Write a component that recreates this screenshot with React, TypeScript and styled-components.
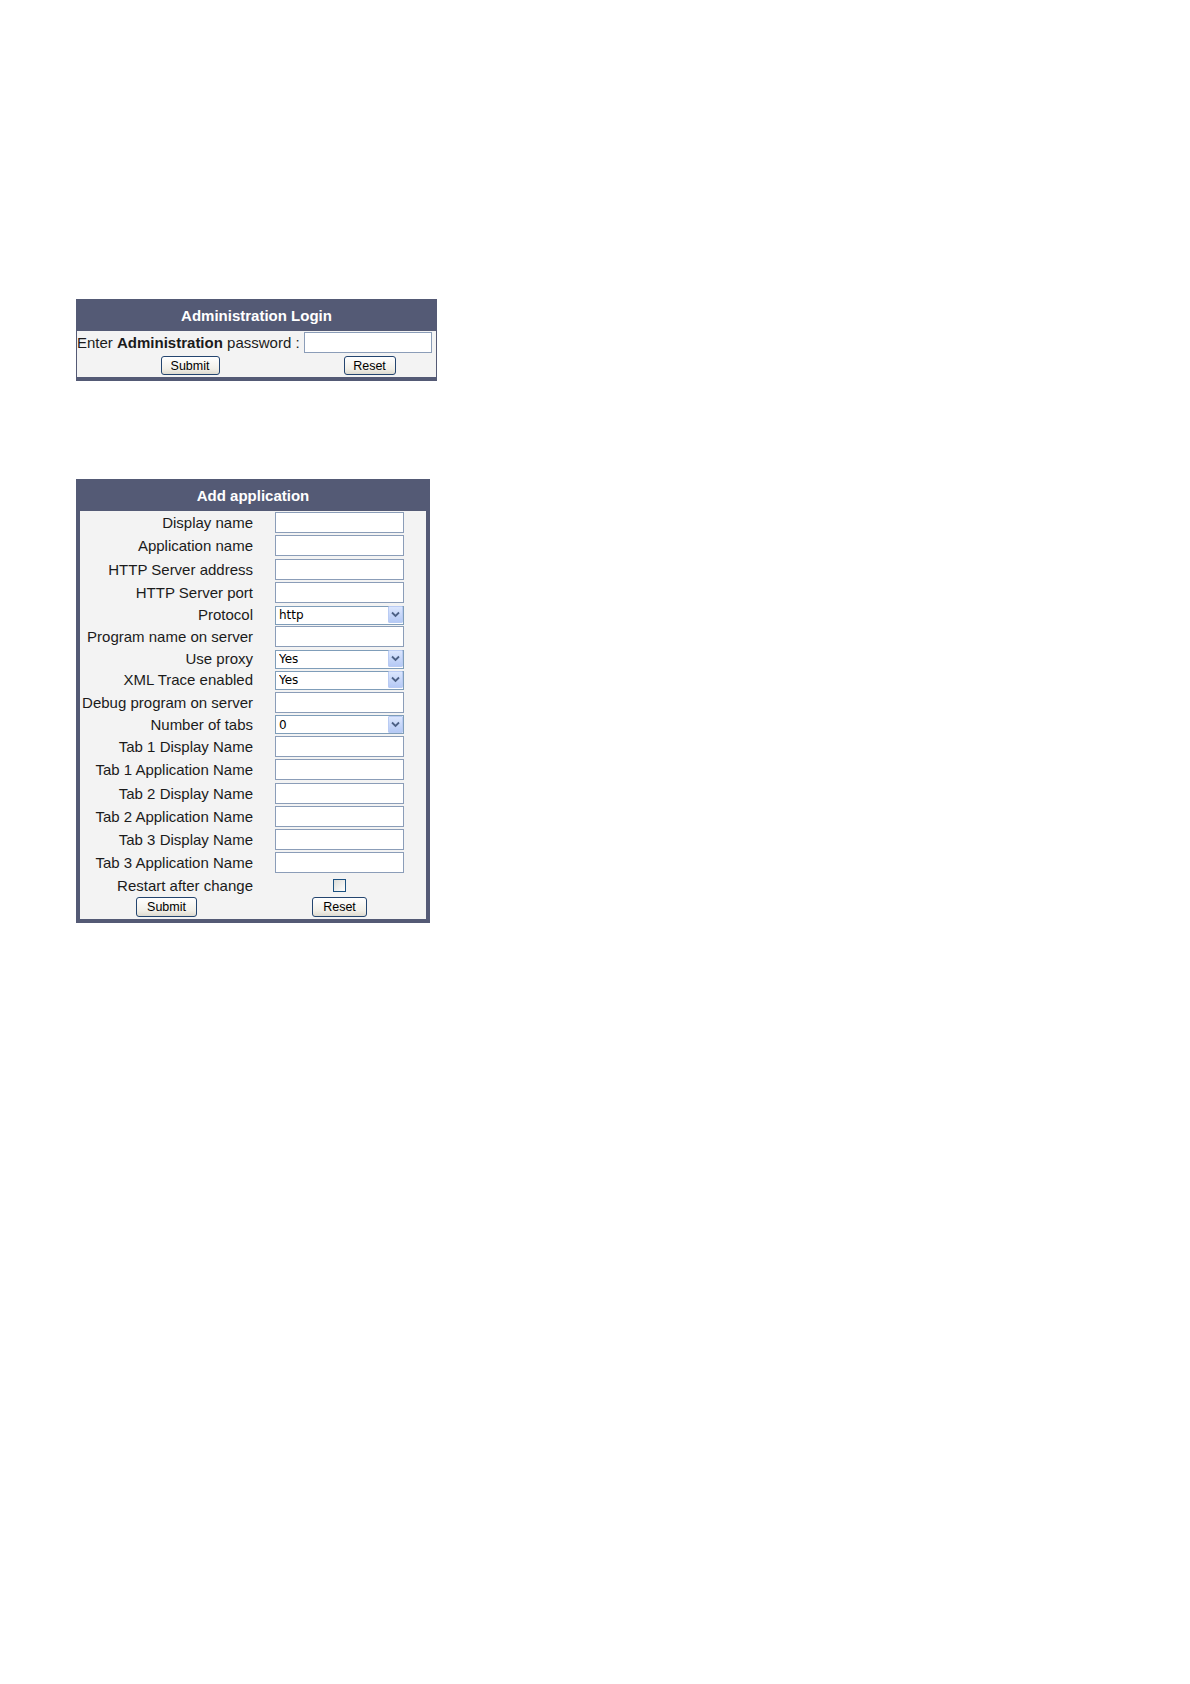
import React from 'react';
import styled, { createGlobalStyle } from 'styled-components';

const GlobalStyle = createGlobalStyle`
  html, body {
    margin: 0;
    padding: 0;
    background: #ffffff;
  }
  body {
    font-family: "Liberation Sans", Arial, sans-serif;
    color: #1b1b1b;
  }
`;

const Page = styled.div`
  display: flex;
  flex-direction: column;
  align-items: flex-start;
  gap: 98px;
  padding: 299px 0 0 76px;
  min-height: 1684px;
  box-sizing: border-box;
`;

const Panel = styled.form<{ $width: number; $side: number }>`
  width: ${(p) => p.$width}px;
  box-sizing: border-box;
  background: #545a75;
  padding: 0 ${(p) => p.$side}px 4px;
  display: flex;
  flex-direction: column;
  margin: 0;
`;

const PanelTitle = styled.div`
  height: 32px;
  display: flex;
  align-items: center;
  justify-content: center;
  color: #ffffff;
  font-weight: bold;
  font-size: 15px;
`;

const PanelBody = styled.div`
  background: #f3f3f3;
  display: flex;
  flex-direction: column;
`;

const Row = styled.div<{ $cols: string; $height: number }>`
  display: grid;
  grid-template-columns: ${(p) => p.$cols};
  align-items: center;
  height: ${(p) => p.$height}px;
`;

const Label = styled.label`
  text-align: right;
  font-size: 15px;
  white-space: nowrap;
  color: #1b1b1b;
`;

const Prompt = styled.span`
  font-size: 15px;
  white-space: nowrap;

  b {
    font-weight: bold;
  }
`;

const Cell = styled.div<{ $justify?: string }>`
  display: flex;
  justify-content: ${(p) => p.$justify || 'center'};
  align-items: center;
`;

const TextInput = styled.input<{ $width?: number; $inset?: number }>`
  width: ${(p) => p.$width || 129}px;
  height: 21px;
  margin-left: ${(p) => p.$inset || 0}px;
  box-sizing: border-box;
  border: 1px solid #8b9db8;
  background: #ffffff;
  padding: 0 3px;
  font: 12px "DejaVu Sans", sans-serif;
  outline: none;
`;

const SelectWrap = styled.div`
  position: relative;
  width: 129px;
  height: 19px;
`;

const Select = styled.select`
  appearance: none;
  -webkit-appearance: none;
  width: 100%;
  height: 100%;
  box-sizing: border-box;
  border: 1px solid #7f9db9;
  border-radius: 0;
  background: #ffffff;
  padding: 0 18px 0 3px;
  font: 12px "DejaVu Sans", Verdana, sans-serif;
  color: #000000;
  outline: none;
`;

const Arrow = styled.span`
  position: absolute;
  top: 1px;
  right: 1px;
  bottom: 1px;
  width: 15px;
  box-sizing: border-box;
  border: 1px solid #b9cbf3;
  border-radius: 1px;
  background: linear-gradient(#dbe6fd, #b5c9f5);
  display: flex;
  align-items: center;
  justify-content: center;
  pointer-events: none;
`;

const Button = styled.button<{ $width: number; $height: number }>`
  width: ${(p) => p.$width}px;
  height: ${(p) => p.$height}px;
  padding: 0;
  box-sizing: border-box;
  border: 1px solid #24456f;
  border-radius: 3px;
  background: linear-gradient(#ffffff, #f1efe8 70%, #dedbd0);
  font: 12.5px "Liberation Sans", Arial, sans-serif;
  color: #000000;
  cursor: pointer;
`;

const Checkbox = styled.input`
  appearance: none;
  -webkit-appearance: none;
  width: 13px;
  height: 13px;
  margin: 0;
  box-sizing: border-box;
  border: 1px solid #1c5180;
  background: linear-gradient(135deg, #dcdcd7, #ffffff);
`;

type Field = {
  label: string;
  kind: 'text' | 'select' | 'check';
  value?: string;
};

const fields: Field[] = [
  { label: 'Display name', kind: 'text' },
  { label: 'Application name', kind: 'text' },
  { label: 'HTTP Server address', kind: 'text' },
  { label: 'HTTP Server port', kind: 'text' },
  { label: 'Protocol', kind: 'select', value: 'http' },
  { label: 'Program name on server', kind: 'text' },
  { label: 'Use proxy', kind: 'select', value: 'Yes' },
  { label: 'XML Trace enabled', kind: 'select', value: 'Yes' },
  { label: 'Debug program on server', kind: 'text' },
  { label: 'Number of tabs', kind: 'select', value: '0' },
  { label: 'Tab 1 Display Name', kind: 'text' },
  { label: 'Tab 1 Application Name', kind: 'text' },
  { label: 'Tab 2 Display Name', kind: 'text' },
  { label: 'Tab 2 Application Name', kind: 'text' },
  { label: 'Tab 3 Display Name', kind: 'text' },
  { label: 'Tab 3 Application Name', kind: 'text' },
  { label: 'Restart after change', kind: 'check' },
];

const rowHeight = { text: 23.3, select: 21, check: 21 };

const Chevron = () => (
  <svg width="9" height="7" viewBox="0 0 9 7">
    <path d="M1 1.5 L4.5 5 L8 1.5" fill="none" stroke="#4d6185" strokeWidth="1.8" />
  </svg>
);

const DropDown = ({ value }: { value: string }) => (
  <SelectWrap>
    <Select defaultValue={value}>
      <option>{value}</option>
    </Select>
    <Arrow>
      <Chevron />
    </Arrow>
  </SelectWrap>
);

const APP_COLS = '173px 173px';
const LOGIN_COLS = '226px 133px';

const App: React.FC = () => {
  return (
    <>
      <GlobalStyle />
      <Page>
        <Panel $width={361} $side={1} onSubmit={(e) => e.preventDefault()}>
          <PanelTitle>Administration Login</PanelTitle>
          <PanelBody>
            <Row $cols={LOGIN_COLS} $height={23}>
              <Prompt>
                Enter <b>Administration</b> password :
              </Prompt>
              <Cell $justify="flex-start">
                <TextInput type="password" $width={128} $inset={1} />
              </Cell>
            </Row>
            <Row $cols={LOGIN_COLS} $height={23}>
              <Cell>
                <Button type="submit" $width={59} $height={19}>Submit</Button>
              </Cell>
              <Cell>
                <Button type="reset" $width={52} $height={19}>Reset</Button>
              </Cell>
            </Row>
          </PanelBody>
        </Panel>

        <Panel $width={354} $side={4} onSubmit={(e) => e.preventDefault()}>
          <PanelTitle>Add application</PanelTitle>
          <PanelBody>
            {fields.map((f) => (
              <Row key={f.label} $cols={APP_COLS} $height={rowHeight[f.kind]}>
                <Label>{f.label}</Label>
                <Cell>
                  {f.kind === 'text' && <TextInput type="text" />}
                  {f.kind === 'select' && <DropDown value={f.value || ''} />}
                  {f.kind === 'check' && <Checkbox type="checkbox" />}
                </Cell>
              </Row>
            ))}
            <Row $cols={APP_COLS} $height={23.5}>
              <Cell>
                <Button type="submit" $width={61} $height={20}>Submit</Button>
              </Cell>
              <Cell>
                <Button type="reset" $width={55} $height={20}>Reset</Button>
              </Cell>
            </Row>
          </PanelBody>
        </Panel>
      </Page>
    </>
  );
};

export default App;
